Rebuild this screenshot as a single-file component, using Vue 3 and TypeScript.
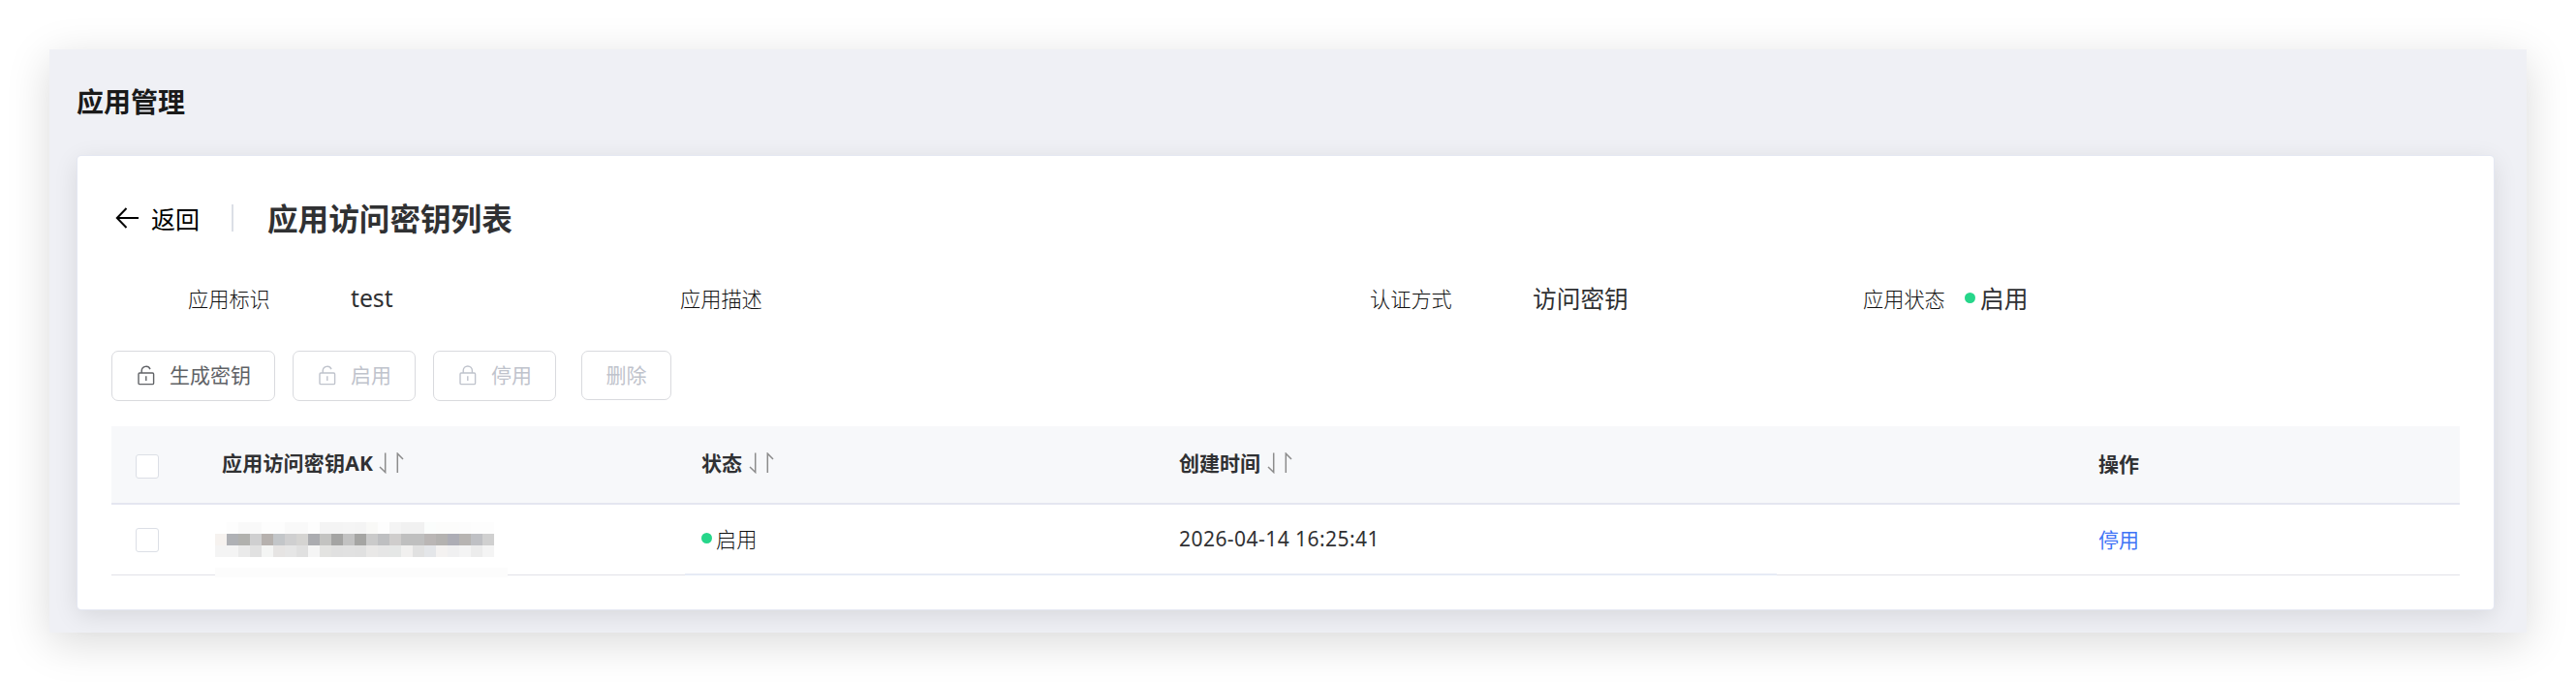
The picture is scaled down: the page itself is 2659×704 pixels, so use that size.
<script setup lang="ts">
interface Column {
  key: string
  title: string
  sortable: boolean
}

interface ActionButton {
  label: string
  icon: 'unlock' | 'lock' | ''
  disabled: boolean
}

const buttons: ActionButton[] = [
  { label: '生成密钥', icon: 'unlock', disabled: false },
  { label: '启用', icon: 'unlock', disabled: true },
  { label: '停用', icon: 'lock', disabled: true },
  { label: '删除', icon: '', disabled: true },
]

const columns: Column[] = [
  { key: 'ak', title: '应用访问密钥AK', sortable: true },
  { key: 'status', title: '状态', sortable: true },
  { key: 'created', title: '创建时间', sortable: true },
  { key: 'action', title: '操作', sortable: false },
]

// Colours of the mosaic that hides the key, one string per row of tiles.
const mosaic: string[][] = [
  'fff fdfdfd f9f9f9 f9f9f9 fdfdfd fdfdfd f9f9f9 f9f9f9 fdfdfd f4f4f4 f4f4f4 f5f5f5 f4f4f4 f9f9f7 fdfdfd f4f4f4 f1f1f1 f1f1f1 fbfdfc fcfcfb fcfcfb fcfcfc fdfdfd fdfdfd',
  'f6f2ef afb1b5 b1b1ae cfcfd0 b6b1ae c3c6c9 cfcfd0 d5d4d2 abacb0 c3c3c1 a4a4a3 c2c2c2 a5a5a3 cacaca bebfc1 cfcdcc bfbfbf bfbfbf bab6b5 b4b2b0 adadb5 b7b4b2 bfc0c4 d0d0d0',
  'f4f4f4 f4f4f4 eaeaea e1e1e1 f4f5f4 e6e4e3 e6e6e6 e0e0e0 f5f5f5 e3e3e1 e0e0e0 e1e1e1 e0e0e0 e9e8e7 e6e6e6 e5e7e6 f1f0ef e1e1e1 e4e6e9 f4f2f1 f0f0f1 f4f4f4 ececec f4f4f4',
].map((row) => row.split(' '))
</script>

<template>
  <div class="page">
    <main class="panel">
      <h1 class="page-title">应用管理</h1>
      <section class="card">
        <header class="card-head">
          <svg class="arrow" width="25" height="24" viewBox="0 0 25 24">
            <path d="M24 12H2M11.5 2L1.8 12L11.5 22" fill="none" stroke="#000" stroke-width="2" />
          </svg>
          <span class="back">返回</span>
          <i class="divider"></i>
          <h2 class="heading">应用访问密钥列表</h2>
        </header>

        <div class="info">
          <div class="field"><span class="label">应用标识</span><span class="value">test</span></div>
          <div class="field"><span class="label">应用描述</span></div>
          <div class="field"><span class="label">认证方式</span><span class="value">访问密钥</span></div>
          <div class="field state"><span class="label">应用状态</span><i class="dot"></i><span class="value">启用</span></div>
        </div>

        <div class="toolbar">
          <button v-for="b in buttons" :key="b.label" class="btn" :class="{ off: b.disabled, plain: !b.icon }">
            <svg v-if="b.icon" class="lock" width="18" height="21" viewBox="0 0 18 21" fill="none" stroke="currentColor" stroke-width="1.4">
              <rect x="1" y="8" width="15.6" height="11.6" rx="1.2" />
              <path v-if="b.icon === 'lock'" d="M4.2 8V5.6a4.6 4.6 0 0 1 9.2 0V8" />
              <path v-else d="M4.2 8V5.6a4.6 4.6 0 0 1 8.8-1.5" />
              <path d="M8.8 11.3v4.8" />
            </svg>
            <span>{{ b.label }}</span>
          </button>
        </div>

        <div class="table">
          <div class="row head">
            <div class="cell check"><i class="box"></i></div>
            <div v-for="c in columns" :key="c.key" class="cell" :class="c.key">
              <span>{{ c.title }}</span>
              <svg v-if="c.sortable" class="sort" width="26" height="22" viewBox="0 0 26 22" fill="none" stroke="#8c8c8c" stroke-width="1.5">
                <path d="M6.7 0.5V20.5L1 15" />
                <path d="M19.3 21V1.2L25 7" />
              </svg>
            </div>
          </div>
          <div class="row body">
            <div class="cell check"><i class="box"></i></div>
            <div class="cell ak">
              <svg class="mosaic" width="302" height="58" viewBox="0 0 302 58" shape-rendering="crispEdges">
                <g v-for="(line, r) in mosaic" :key="r">
                  <rect v-for="(c, i) in line" :key="i" :x="i * 12" :y="r * 12" width="12" height="12" :fill="'#' + c" />
                </g>
                <rect x="0" y="47" width="302" height="10" fill="#fcfcfc" />
              </svg>
            </div>
            <div class="cell status"><i class="dot"></i><span>启用</span></div>
            <div class="cell created"><span class="date">2026-04-14 16:25:41</span></div>
            <div class="cell action"><a class="link">停用</a></div>
          </div>
        </div>
      </section>
    </main>
  </div>
</template>

<style>
html,
body {
  margin: 0;
}
</style>

<style scoped>
.page {
  box-sizing: border-box;
  width: 2659px;
  height: 704px;
  padding: 51px;
  overflow: hidden;
  background: #fff;
}
.panel {
  box-sizing: border-box;
  width: 2557px;
  height: 602px;
  padding: 30px 33px 0 29px;
  background: #eff0f5;
  box-shadow: 0 10px 42px rgba(0, 0, 0, 0.15);
  font-family: 'Noto Sans', 'Noto Sans CJK SC', sans-serif;
  color: #303133;
}
.page-title {
  margin: 0 0 0 -1px;
  height: 80px;
  line-height: 48px;
  font-size: 28px;
  font-weight: 700;
  color: #1a1a1a;
}
.card {
  box-sizing: border-box;
  height: 468px;
  width: 2494px;
  padding: 0 35px;
  background: #fff;
  border-radius: 4px;
  box-shadow: 0 0 0 1px #e4e7f2, 0 6px 26px rgba(0, 0, 0, 0.11);
}
.card-head {
  display: flex;
  align-items: center;
  height: 128px;
}
.arrow {
  margin-left: 4px;
}
.back {
  margin: 0 0 1px 12px;
  width: 83px;
  font-size: 25px;
  color: #000;
}
.divider {
  width: 2px;
  height: 28px;
  background: #dcdfe6;
}
.heading {
  margin: 0 0 3px 35px;
  font-size: 31.6px;
  font-weight: 700;
}
.info {
  display: grid;
  grid-template-columns: 508px 712px 509px 1fr;
  box-sizing: border-box;
  height: 36px;
  padding: 0 0 5px 79px;
}
.field {
  display: flex;
  align-items: center;
}
.label {
  flex: none;
  width: 85px;
  font-size: 21.2px;
  font-weight: 300;
  color: #111;
  white-space: nowrap;
}
.value {
  margin-left: 83px;
  font-size: 24.7px;
}
.dot {
  flex: none;
  width: 11px;
  height: 11px;
  border-radius: 50%;
  background: #26d68a;
}
.state .dot {
  margin-left: 20px;
}
.state .value {
  margin-left: 5px;
}
.toolbar {
  display: flex;
  gap: 18px;
  align-items: flex-start;
  height: 78px;
  padding-top: 37px;
}
.btn {
  box-sizing: border-box;
  height: 52px;
  padding: 0 24px 2px 26px;
  display: flex;
  align-items: center;
  gap: 15px;
  border: 1px solid #d9dade;
  border-radius: 7px;
  background: #fff;
  color: #606266;
  font-family: inherit;
  font-size: 21px;
  line-height: 30px;
}
.btn.off {
  color: #bfc3cc;
}
.btn.plain {
  height: 51px;
  margin-left: 8px;
  padding: 0 24.5px 1px;
}
.row {
  display: grid;
  grid-template-columns: 114px 495px 493px 949px 1fr;
}
.cell {
  display: flex;
  align-items: center;
  min-width: 0;
  font-size: 21px;
}
.head {
  height: 79px;
  background: #f7f8fa;
  border-bottom: 2px solid #e4e6f0;
  font-weight: 700;
}
.head .cell {
  padding-bottom: 5px;
}
.head .sort {
  margin: 2px 0 0 7px;
}
.head .ak {
  letter-spacing: 0.2px;
}
.head .ak .sort {
  margin-left: 6px;
}
.head .check {
  padding-bottom: 0;
}
.head .action {
  padding-bottom: 3px;
}
.body {
  position: relative;
  height: 72px;
  border-bottom: 1px solid #e1e2e8;
}
.body::after {
  content: '';
  position: absolute;
  left: 592px;
  bottom: -1px;
  width: 1127px;
  height: 2px;
  background: #e6ebf5;
}
.body .status,
.body .created,
.body .action {
  padding-bottom: 3px;
}
.box {
  box-sizing: border-box;
  width: 24px;
  height: 25px;
  margin: 4px 0 0 25px;
  border: 1px solid #dcdfe6;
  border-radius: 3px;
  background: #fff;
}
.body .box {
  margin-top: 1px;
}
.sort {
  flex: none;
}
.body .ak {
  align-items: flex-start;
}
.mosaic {
  position: relative;
  z-index: 1;
  flex: none;
  margin: 18px 0 -4px -7px;
}
.body .status {
  color: #111;
  font-size: 21.2px;
  font-weight: 300;
}
.body .status .dot {
  margin-right: 4px;
}
.date {
  letter-spacing: 0.45px;
}
.link {
  color: #3f74f6;
}
</style>
